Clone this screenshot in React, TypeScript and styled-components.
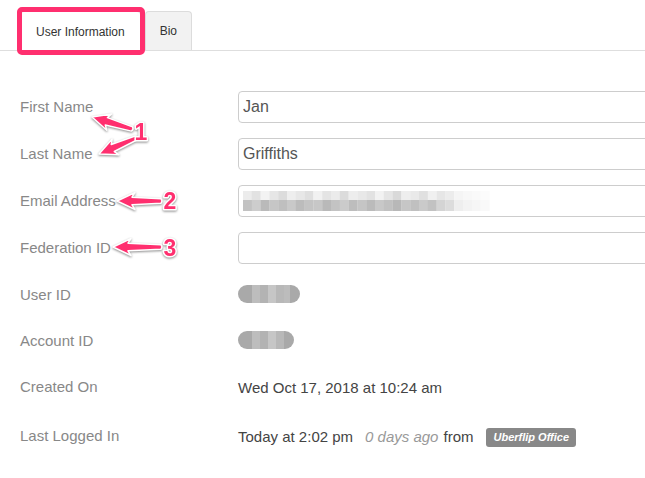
import React from "react";
import styled, { createGlobalStyle } from "styled-components";

const PINK = "#ff2f6f";

const Global = createGlobalStyle`
  html, body { margin: 0; padding: 0; background: #fff; overflow: hidden; }
  body { font-family: "Liberation Sans", Arial, Helvetica, sans-serif; }
`;

const Page = styled.div`
  position: relative;
  width: 645px;
  height: 478px;
  overflow: hidden;
  background: #fff;
`;

const TabBar = styled.div`
  display: flex;
  gap: 4px;
  padding: 11px 0 0 20px;
  height: 39px;
  border-bottom: 1px solid #dedede;
`;

const Tab = styled.div<{ $active?: boolean }>`
  box-sizing: border-box;
  height: ${(p) => (p.$active ? "40px" : "39px")};
  display: flex;
  align-items: center;
  padding: 0 ${(p) => (p.$active ? "15px" : "14px")};
  border: 1px solid #dcdcdc;
  border-bottom: none;
  border-radius: 4px 4px 0 0;
  background: ${(p) => (p.$active ? "#fff" : "#f2f2f2")};
  font-size: 12px;
  color: #333;
  white-space: nowrap;
`;

const TabHighlight = styled.div`
  position: absolute;
  left: 17px;
  top: 7px;
  width: 128px;
  height: 48px;
  box-sizing: border-box;
  border: 5px solid ${PINK};
  border-radius: 5px;
  pointer-events: none;
`;

const Form = styled.div`
  padding: 32px 0 0 20px;
  display: flex;
  flex-direction: column;
`;

const Row = styled.div<{ $h: number }>`
  display: grid;
  grid-template-columns: 218px 440px;
  align-items: center;
  height: ${(p) => p.$h}px;
`;

const Label = styled.div`
  font-size: 15px;
  color: #888;
`;

const TextInput = styled.input`
  box-sizing: border-box;
  width: 100%;
  height: 32px;
  margin: 0;
  padding: 0 4px;
  border: 1px solid #cdcdcd;
  border-radius: 4px;
  font-family: "Liberation Sans", Arial, sans-serif;
  font-size: 16px;
  color: #555;
  background: #fff;
  outline: none;
`;

const FakeInput = styled.div`
  box-sizing: border-box;
  height: 32px;
  padding: 2px 4px 0;
  border: 1px solid #cdcdcd;
  border-radius: 4px;
  display: flex;
  align-items: center;
`;

const Pill = styled.div<{ $w: number }>`
  width: ${(p) => p.$w}px;
  height: 18px;
  border-radius: 9px;
  background: linear-gradient(
    90deg,
    #a9a9a9 0 14px,
    #bdbdbd 14px 22px,
    #b3b3b3 22px 30px,
    #c6c6c6 30px 38px,
    #b8b8b8 38px 46px,
    #bcbcbc 46px ${(p) => p.$w - 10}px,
    #a9a9a9 ${(p) => p.$w - 10}px
  );
`;

const Value = styled.div<{ $shift?: number }>`
  font-size: 15px;
  color: #444;
  display: flex;
  align-items: center;
  white-space: nowrap;
  margin-top: ${(p) => p.$shift ?? 0}px;
`;

const Ago = styled.span`
  font-style: italic;
  color: #999;
  margin-left: 12px;
  margin-right: 5px;
`;

const Badge = styled.span`
  margin-left: 13px;
  margin-top: 2px;
  background: #888;
  color: #fff;
  font-size: 11px;
  font-weight: bold;
  font-style: italic;
  padding: 3px 7px 4px;
  border-radius: 3px;
  line-height: 12px;
`;

const Overlay = styled.svg`
  position: absolute;
  left: 0;
  top: 0;
  pointer-events: none;
  overflow: visible;
  filter: drop-shadow(0 1px 1.2px rgba(0, 0, 0, 0.45));
`;

const Num = styled.text`
  font-family: "Liberation Sans", Arial, sans-serif;
  font-weight: bold;
  font-size: 23px;
  fill: ${PINK};
  stroke: #fff;
  stroke-width: 3px;
  paint-order: stroke;
  stroke-linejoin: round;
`;

const topShades = [
  "#ececec", "#e2e2e2", "#f3f3f3", "#e6e6e6", "#dcdcdc", "#eeeeee", "#e7e7e7", "#dfdfdf",
  "#f1f1f1", "#e4e4e4", "#ebebeb", "#dbdbdb", "#ededed", "#e8e8e8", "#e2e2e2", "#f2f2f2",
  "#e5e5e5", "#d9d9d9", "#eeeeee", "#e9e9e9", "#e0e0e0", "#f0f0f0", "#e6e6e6", "#ececec",
  "#f5f5f5", "#f8f8f8", "#fafafa", "#fcfcfc",
];
const botShades = [
  "#c2c2c2", "#cdcdcd", "#bababa", "#c6c6c6", "#bfbfbf", "#c9c9c9", "#bcbcbc", "#c4c4c4",
  "#c7c7c7", "#b9b9b9", "#c3c3c3", "#cbcbcb", "#bdbdbd", "#c5c5c5", "#bbbbbb", "#c8c8c8",
  "#c1c1c1", "#b8b8b8", "#c6c6c6", "#c0c0c0", "#cacaca", "#c2c2c2", "#d4d4d4", "#dcdcdc",
  "#eeeeee", "#f3f3f3", "#f6f6f6", "#f9f9f9",
];

function Redacted() {
  const bw = 8.8;
  return (
    <svg width="250" height="22" viewBox="0 0 250 22" aria-hidden>
      {topShades.map((c, i) => (
        <rect key={"t" + i} x={i * bw} y={0} width={bw + 0.2} height={9} fill={c} />
      ))}
      {botShades.map((c, i) => (
        <rect key={"b" + i} x={i * bw} y={9} width={bw + 0.2} height={11} fill={c} />
      ))}
    </svg>
  );
}

type ArrowSpec = { tip: [number, number]; tail: [number, number] };

function Arrow({ tip, tail }: ArrowSpec) {
  const dx = tail[0] - tip[0];
  const dy = tail[1] - tip[1];
  const len = Math.sqrt(dx * dx + dy * dy);
  const ang = (Math.atan2(dy, dx) * 180) / Math.PI;
  const L = 15;
  const hw = 8.5;
  const sw1 = 3.8;
  const sw2 = 2.2;
  const d = `M0 0 L${L + 3} ${-hw} L${L} ${-sw1} L${len} ${-sw2} Q${len + 2} 0 ${len} ${sw2} L${L} ${sw1} L${L + 3} ${hw} Z`;
  return (
    <g transform={`translate(${tip[0]} ${tip[1]}) rotate(${ang})`}>
      <path d={d} fill={PINK} stroke="#fff" strokeWidth={1.5} strokeLinejoin="round" />
    </g>
  );
}

const arrows: ArrowSpec[] = [
  { tip: [92, 117], tail: [132, 129] },
  { tip: [99, 154], tail: [136, 138] },
  { tip: [117, 201], tail: [161, 201] },
  { tip: [113, 247], tail: [161, 247] },
];

export default function App() {
  return (
    <Page>
      <Global />
      <TabBar>
        <Tab $active>User Information</Tab>
        <Tab>Bio</Tab>
      </TabBar>
      <Form>
        <Row $h={47}>
          <Label>First Name</Label>
          <TextInput readOnly defaultValue="Jan" />
        </Row>
        <Row $h={47}>
          <Label>Last Name</Label>
          <TextInput readOnly defaultValue="Griffiths" />
        </Row>
        <Row $h={47}>
          <Label>Email Address</Label>
          <FakeInput>
            <Redacted />
          </FakeInput>
        </Row>
        <Row $h={47}>
          <Label>Federation ID</Label>
          <TextInput readOnly defaultValue="" />
        </Row>
        <Row $h={46}>
          <Label>User ID</Label>
          <Pill $w={62} />
        </Row>
        <Row $h={46}>
          <Label>Account ID</Label>
          <Pill $w={56} />
        </Row>
        <Row $h={46}>
          <Label>Created On</Label>
          <Value $shift={2}>Wed Oct 17, 2018 at 10:24 am</Value>
        </Row>
        <Row $h={52}>
          <Label>Last Logged In</Label>
          <Value $shift={3}>
            Today at 2:02 pm<Ago>0 days ago</Ago>from<Badge>Uberflip Office</Badge>
          </Value>
        </Row>
      </Form>
      <TabHighlight />
      <Overlay width="645" height="478">
        {arrows.map((a, i) => (
          <Arrow key={i} {...a} />
        ))}
        <Num x={141} y={140} textAnchor="middle">1</Num>
        <Num x={170} y={209} textAnchor="middle">2</Num>
        <Num x={170} y={256} textAnchor="middle">3</Num>
      </Overlay>
    </Page>
  );
}
